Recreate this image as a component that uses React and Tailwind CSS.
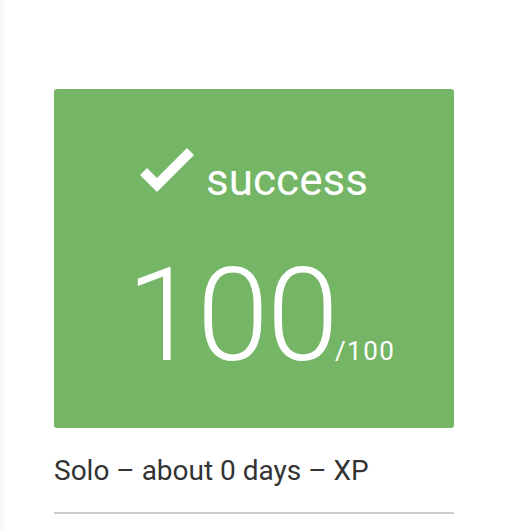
import React from "react";

const Check = () => (
  <svg width="54" height="46" viewBox="0 0 54 46" className="mb-[10px] shrink-0">
    <polygon points="17,46 0,29 7,22 17,32 47,2 54,9" fill="#ffffff" />
  </svg>
);

export default function App() {
  return (
    <div className="min-h-[530px] bg-white border-l-4 border-[#f8f8f8] font-['Roboto',sans-serif]">
      <div className="pt-[89px] pl-[50px] w-[450px]">
        {/* result card */}
        <div className="w-[400px] h-[339px] bg-[#74b566] rounded-[3px] text-white flex flex-col items-center pt-[57px]">
          <div className="flex items-end">
            <Check />
            <span className="ml-[12px] text-[44px] leading-none">success</span>
          </div>
          <div className="flex items-baseline mt-[49px] pl-[14px]">
            <span className="text-[130px] leading-none font-light tracking-[-2px]">100</span>
            <span className="ml-[-2px] text-[26px] leading-none tracking-[1.5px]">/100</span>
          </div>
        </div>

        <p className="mt-[29px] text-[28px] leading-none text-[#333]">
          Solo – about 0 days – XP
        </p>
        <div className="mt-[27px] w-[400px] h-[2px] bg-[#cccccc]" />
      </div>
    </div>
  );
}
